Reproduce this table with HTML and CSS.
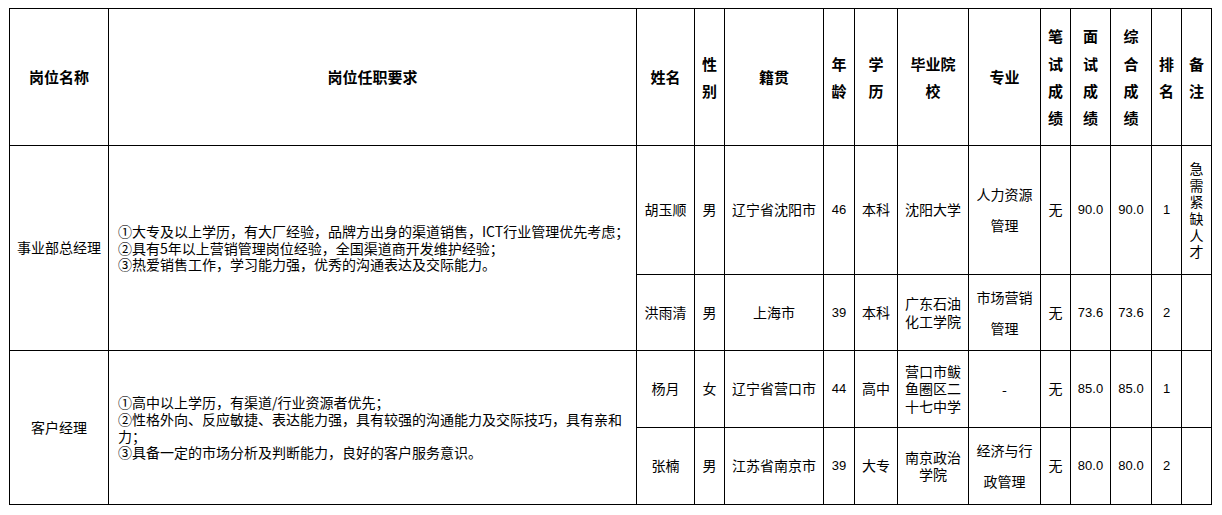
FILE: index.html
```html
<!DOCTYPE html>
<html lang="zh-CN">
<head>
<meta charset="utf-8">
<title>岗位人员汇总表</title>
<link rel="stylesheet" href="styles.css">
</head>
<body>
<table class="sheet">
  <colgroup>
    <col class="c-post"><col class="c-req"><col class="c-name"><col class="c-sex"><col class="c-origin"><col class="c-age"><col class="c-edu"><col class="c-school"><col class="c-major"><col class="c-written"><col class="c-interview"><col class="c-total"><col class="c-rank"><col class="c-note">
  </colgroup>
  <tr class="r-head">
    <th>岗位名称</th>
    <th>岗位任职要求</th>
    <th>姓名</th>
    <th>性<br>别</th>
    <th>籍贯</th>
    <th>年<br>龄</th>
    <th>学<br>历</th>
    <th>毕业院<br>校</th>
    <th>专业</th>
    <th>笔<br>试<br>成<br>绩</th>
    <th>面<br>试<br>成<br>绩</th>
    <th>综<br>合<br>成<br>绩</th>
    <th>排<br>名</th>
    <th>备<br>注</th>
  </tr>
  <tr class="r-1">
    <td rowspan="2">事业部总经理</td>
    <td rowspan="2" class="req">①大专及以上学历，有大厂经验，品牌方出身的渠道销售，ICT行业管理优先考虑；<br>②具有5年以上营销管理岗位经验，全国渠道商开发维护经验；<br>③热爱销售工作，学习能力强，优秀的沟通表达及交际能力。</td>
    <td>胡玉顺</td>
    <td>男</td>
    <td>辽宁省沈阳市</td>
    <td class="num">46</td>
    <td>本科</td>
    <td class="school">沈阳大学</td>
    <td class="major">人力资源管理</td>
    <td>无</td>
    <td class="num">90.0</td>
    <td class="num">90.0</td>
    <td class="num">1</td>
    <td class="note">急需紧缺人才</td>
  </tr>
  <tr class="r-2">
    <td>洪雨清</td>
    <td>男</td>
    <td>上海市</td>
    <td class="num">39</td>
    <td>本科</td>
    <td class="school">广东石油化工学院</td>
    <td class="major">市场营销管理</td>
    <td>无</td>
    <td class="num">73.6</td>
    <td class="num">73.6</td>
    <td class="num">2</td>
    <td class="note"></td>
  </tr>
  <tr class="r-3">
    <td rowspan="2">客户经理</td>
    <td rowspan="2" class="req">①高中以上学历，有渠道/行业资源者优先；<br>②性格外向、反应敏捷、表达能力强，具有较强的沟通能力及交际技巧，具有亲和<br>力；<br>③具备一定的市场分析及判断能力，良好的客户服务意识。</td>
    <td>杨月</td>
    <td>女</td>
    <td>辽宁省营口市</td>
    <td class="num">44</td>
    <td>高中</td>
    <td class="school">营口市鲅鱼圈区二十七中学</td>
    <td class="major">-</td>
    <td>无</td>
    <td class="num">85.0</td>
    <td class="num">85.0</td>
    <td class="num">1</td>
    <td class="note"></td>
  </tr>
  <tr class="r-4">
    <td>张楠</td>
    <td>男</td>
    <td>江苏省南京市</td>
    <td class="num">39</td>
    <td>大专</td>
    <td class="school">南京政治学院</td>
    <td class="major">经济与行政管理</td>
    <td>无</td>
    <td class="num">80.0</td>
    <td class="num">80.0</td>
    <td class="num">2</td>
    <td class="note"></td>
  </tr>
</table>
</body>
</html>
```

FILE: styles.css
```css
html, body {
  margin: 0;
  padding: 0;
  background: #ffffff;
}

body {
  font-family: "Noto Sans CJK SC", "Liberation Sans", sans-serif;
  color: #000000;
}

.sheet {
  margin: 8px 0 0 9px;
  border-collapse: collapse;
  table-layout: fixed;
  width: 1203px;
}

.c-post { width: 99px; }
.c-req { width: 528px; }
.c-name { width: 58px; }
.c-sex { width: 30px; }
.c-origin { width: 99px; }
.c-age { width: 31px; }
.c-edu { width: 43px; }
.c-school { width: 71px; }
.c-major { width: 72px; }
.c-written { width: 30px; }
.c-interview { width: 40px; }
.c-total { width: 41px; }
.c-rank { width: 30px; }
.c-note { width: 30px; }

.sheet th,
.sheet td {
  border: 1px solid #000000;
  padding: 0 2px;
  text-align: center;
  vertical-align: middle;
  font-size: 14px;
  line-height: 17.5px;
  font-weight: normal;
  overflow: hidden;
}

.sheet th {
  font-weight: bold;
  font-size: 15px;
  line-height: 27.4px;
}

.r-head { height: 137px; }
.r-1 { height: 129px; }
.r-2 { height: 76px; }
.r-3 { height: 77px; }
.r-4 { height: 77px; }

.sheet td.req {
  text-align: left;
  padding-left: 9px;
  line-height: 16.6px;
  white-space: nowrap;
}

.sheet td.num {
  font-family: "Liberation Sans", sans-serif;
  font-size: 13px;
}

.sheet td.school {
  padding: 0 5px;
}

.sheet td.major {
  padding: 0 6px;
  line-height: 31px;
}

.sheet td.note {
  line-height: 16.6px;
}
```
